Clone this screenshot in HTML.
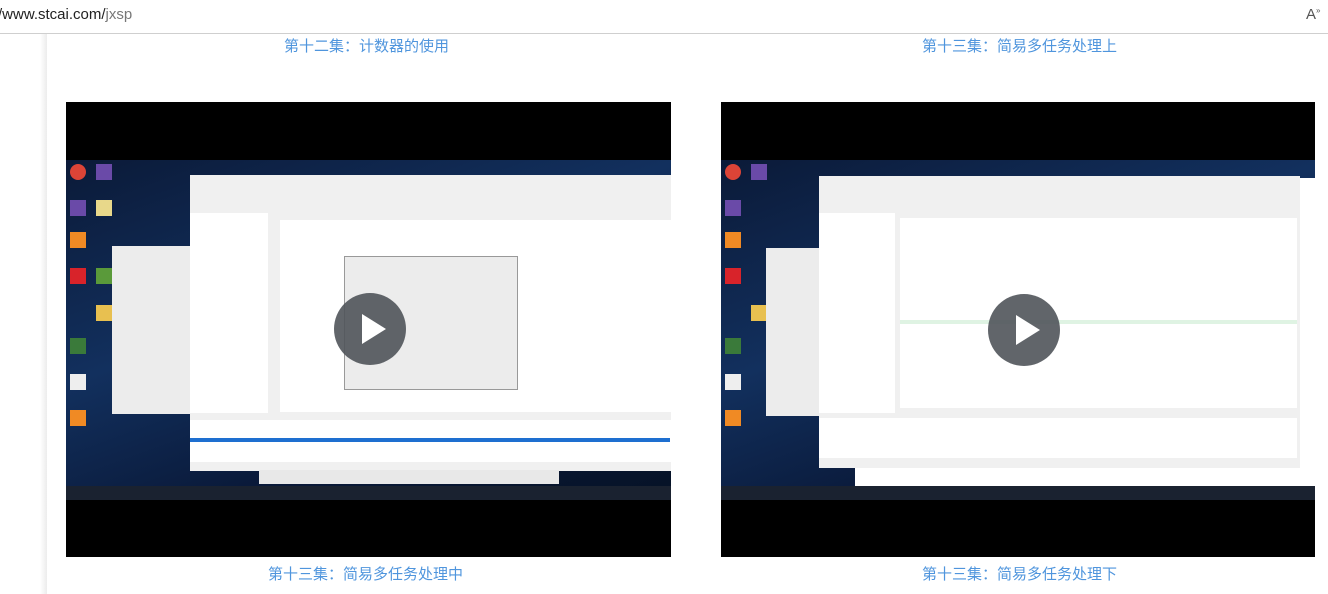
<!DOCTYPE html>
<html><head><meta charset="utf-8"><style>
body{margin:0;width:1328px;height:592px;background:#fff;position:relative;overflow:hidden;font-family:"Liberation Sans","Noto Sans CJK SC",sans-serif}
.a{position:absolute}
.cap{position:absolute;color:#4f95dd;font-size:15px;white-space:nowrap;font-family:"Noto Sans CJK SC",sans-serif}
.desk{background:linear-gradient(160deg,#0b1a38 0%,#12305e 40%,#0a1a3a 70%,#061226 100%)}
.play{position:absolute;width:72px;height:72px;border-radius:50%;background:rgba(80,84,90,.9)}
.play:after{content:"";position:absolute;left:28px;top:21px;border-left:24px solid #fff;border-top:15px solid transparent;border-bottom:15px solid transparent}
.ic{position:absolute;width:16px;height:16px}
</style></head><body>
<div class="a" style="left:0;top:0;width:1328px;height:33px;background:#fff;border-bottom:1px solid #cfcfcf"></div>
<div class="a" style="left:-2px;top:6px;font-size:15px;color:#222">/www.stcai.com/<span style="color:#777">jxsp</span></div>
<div class="a" style="left:1306px;top:6px;font-size:15px;color:#555">A<sup style="font-size:8px">»</sup></div>
<div class="a" style="left:40px;top:34px;width:7px;height:560px;background:linear-gradient(90deg,#fff,#ececec)"></div>

<div class="cap" style="left:284px;top:35px">第十二集：计数器的使用</div>
<div class="cap" style="left:922px;top:35px">第十三集：简易多任务处理上</div>
<div class="cap" style="left:268px;top:563px">第十三集：简易多任务处理中</div>
<div class="cap" style="left:922px;top:563px">第十三集：简易多任务处理下</div>

<!-- left video -->
<div class="a" style="left:66px;top:102px;width:605px;height:455px;background:#000"></div>
<div class="a desk" style="left:66px;top:160px;width:605px;height:340px"></div>
<div class="ic" style="left:70px;top:164px;background:#dc4437;border-radius:50%"></div>
<div class="ic" style="left:70px;top:200px;background:#6a4aa8"></div>
<div class="ic" style="left:70px;top:232px;background:#f08a24"></div>
<div class="ic" style="left:70px;top:268px;background:#d8232a"></div>
<div class="ic" style="left:70px;top:338px;background:#3a7a3a"></div>
<div class="ic" style="left:70px;top:374px;background:#eee"></div>
<div class="ic" style="left:70px;top:410px;background:#f08a24"></div>
<div class="ic" style="left:96px;top:164px;background:#6a4aa8"></div>
<div class="ic" style="left:96px;top:200px;background:#e8d88a"></div>
<div class="ic" style="left:96px;top:268px;background:#5a9a3a"></div>
<div class="ic" style="left:96px;top:305px;background:#e8c050"></div>
<div class="a" style="left:112px;top:246px;width:80px;height:168px;background:#ececec"></div>
<div class="a" style="left:190px;top:175px;width:481px;height:296px;background:#f0f0f0"></div>
<div class="a" style="left:190px;top:213px;width:78px;height:200px;background:#fff"></div>
<div class="a" style="left:280px;top:220px;width:391px;height:192px;background:#fff"></div>
<div class="a" style="left:344px;top:256px;width:172px;height:132px;background:#ececec;border:1px solid #999"></div>
<div class="a" style="left:190px;top:420px;width:481px;height:42px;background:#fff"></div>
<div class="a" style="left:190px;top:438px;width:480px;height:4px;background:#1e6fd0"></div>
<div class="a" style="left:259px;top:470px;width:300px;height:14px;background:#e8e8e8"></div>
<div class="a" style="left:66px;top:486px;width:605px;height:14px;background:#1a2230"></div>
<div class="play" style="left:334px;top:293px"></div>

<!-- right video -->
<div class="a" style="left:721px;top:102px;width:594px;height:455px;background:#000"></div>
<div class="a desk" style="left:721px;top:160px;width:594px;height:340px"></div>
<div class="ic" style="left:725px;top:164px;background:#dc4437;border-radius:50%"></div>
<div class="ic" style="left:725px;top:200px;background:#6a4aa8"></div>
<div class="ic" style="left:725px;top:232px;background:#f08a24"></div>
<div class="ic" style="left:725px;top:268px;background:#d8232a"></div>
<div class="ic" style="left:725px;top:338px;background:#3a7a3a"></div>
<div class="ic" style="left:725px;top:374px;background:#eee"></div>
<div class="ic" style="left:725px;top:410px;background:#f08a24"></div>
<div class="ic" style="left:751px;top:164px;background:#6a4aa8"></div>
<div class="ic" style="left:751px;top:305px;background:#e8c050"></div>
<div class="a" style="left:1296px;top:178px;width:19px;height:308px;background:#fff"></div>
<div class="a" style="left:855px;top:466px;width:445px;height:20px;background:#fff"></div>
<div class="a" style="left:766px;top:248px;width:54px;height:168px;background:#ececec"></div>
<div class="a" style="left:819px;top:176px;width:481px;height:292px;background:#f0f0f0"></div>
<div class="a" style="left:819px;top:213px;width:76px;height:200px;background:#fff"></div>
<div class="a" style="left:900px;top:218px;width:397px;height:190px;background:#fff"></div>
<div class="a" style="left:900px;top:320px;width:397px;height:4px;background:#dff3e3"></div>
<div class="a" style="left:819px;top:418px;width:478px;height:40px;background:#fff"></div>
<div class="a" style="left:721px;top:486px;width:594px;height:14px;background:#1a2230"></div>
<div class="play" style="left:988px;top:294px"></div>
</body></html>
